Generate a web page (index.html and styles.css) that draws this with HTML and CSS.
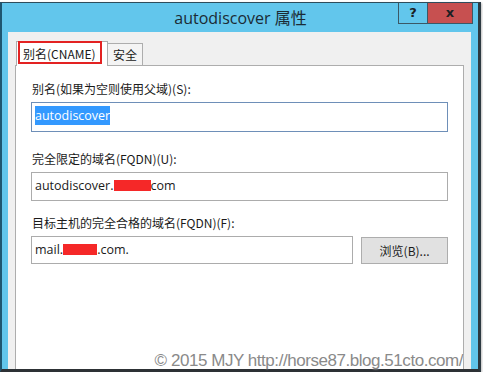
FILE: index.html
```html
<!DOCTYPE html>
<html lang="zh-CN">
<head>
    <meta charset="UTF-8">
    <meta name="viewport" content="width=device-width, initial-scale=1.0">
    <title>autodiscover 属性</title>
    <link rel="stylesheet" href="styles.css">
</head>
<body>
    <div class="window">
        <div class="titlebar">
            <div></div>
            <div class="title">autodiscover 属性</div>
            <div class="caption-buttons">
                <span class="btn-help">?</span>
                <span class="btn-close">x</span>
            </div>
        </div>
        <div class="dialog-body">
            <div class="tabs">
                <div class="tab tab-active">别名(CNAME)<span class="annot"></span></div>
                <div class="tab">安全</div>
            </div>
            <div class="panel">
                <div class="field field-alias">
                    <div class="field-label">别名(如果为空则使用父域)(S):</div>
                    <div class="input input-focus"><span class="selected">autodiscover</span></div>
                </div>
                <div class="field field-fqdn">
                    <div class="field-label">完全限定的域名(FQDN)(U):</div>
                    <div class="input">autodiscover.<span class="redact redact-long"></span>com</div>
                </div>
                <div class="field field-target">
                    <div class="field-label">目标主机的完全合格的域名(FQDN)(F):</div>
                    <div class="row">
                        <div class="input input-short">mail.<span class="redact redact-short"></span>.com.</div>
                        <button class="btn">浏览(B)...</button>
                    </div>
                </div>
                <div class="watermark">© 2015 MJY http://horse87.blog.51cto.com/</div>
            </div>
        </div>
    </div>
</body>
</html>
```

FILE: styles.css
```css
body {
    margin: 0;
    padding-top: 2px;
    background: #fff;
    font-family: "Open Sans", "Noto Sans CJK SC", sans-serif;
    color: #1a1a1a;
    overflow: hidden;
}
.window {
    width: 481px;
    height: 370px;
    box-sizing: border-box;
    background: #62c6ec;
    border-top: 1px solid #2e4d5c;
    border-left: 2px solid #1f5670;
    border-right: 3px solid #2d3a42;
    border-bottom: 3px solid #2d3135;
    padding: 0 7px 0 6px;
    display: flex;
    flex-direction: column;
    box-shadow: 1px 1px 2px rgba(0, 0, 0, 0.25);
}
.titlebar {
    height: 29px;
    display: grid;
    grid-template-columns: 1fr auto 1fr;
}
.title {
    font-size: 16px;
    line-height: 30px;
    color: #1b2b35;
    margin-left: 2px;
}
.caption-buttons {
    display: flex;
    justify-content: flex-end;
    align-items: flex-start;
    margin-right: -2px;
}
.caption-buttons span {
    height: 21px;
    box-sizing: border-box;
    border: 1px solid #3b5866;
    border-top: none;
    font-family: "DejaVu Sans", sans-serif;
    font-weight: bold;
    font-size: 13px;
    line-height: 19px;
    text-align: center;
    color: #1b2024;
}
.btn-help {
    width: 30px;
    background: #62c6ec;
}
.btn-close {
    width: 46px;
    margin-left: -1px;
    background: #c75050;
}
.dialog-body {
    flex: 1;
    background: #f0f0f0;
    padding: 9px 7px 0 7px;
    display: flex;
    flex-direction: column;
}
.tabs {
    display: flex;
    align-items: flex-end;
    margin-left: 1px;
    height: 24px;
}
.tab {
    box-sizing: border-box;
    height: 22px;
    padding: 0 5px;
    border: 1px solid #adadad;
    border-bottom: none;
    background: #f4f4f4;
    font-family: "Noto Sans CJK SC", sans-serif;
    font-size: 12px;
    line-height: 22px;
    margin-left: -1px;
}
.tab-active {
    position: relative;
    z-index: 1;
    width: 92px;
    height: 25px;
    margin-bottom: -1px;
    background: #fff;
    padding-left: 6px;
    line-height: 23px;
    margin-left: 0;
}
.annot {
    position: absolute;
    left: 1px;
    top: -1px;
    width: 84px;
    height: 23px;
    box-sizing: border-box;
    border: 2px solid #e32222;
}
.panel {
    position: relative;
    flex: 1;
    background: #fff;
    border: 1px solid #adadad;
    border-bottom: none;
    padding: 0 15px;
}
.field-label {
    font-family: "Noto Sans CJK SC", sans-serif;
    font-size: 12px;
    line-height: 16px;
    padding-left: 1px;
    margin-bottom: 5px;
}
.field-alias {
    margin-top: 15px;
}
.field-fqdn {
    margin-top: 19px;
}
.field-target {
    margin-top: 14px;
}
.input {
    box-sizing: border-box;
    height: 29px;
    border: 1px solid #acacac;
    padding: 0 3px;
    font-size: 12.5px;
    line-height: 26px;
    white-space: nowrap;
}
.input-focus {
    height: 30px;
    border-color: #6e8fb8;
}
.selected {
    background: #3399ff;
    color: #fff;
    padding: 1px 0;
}
.redact {
    display: inline-block;
    height: 11px;
    background: #f52828;
    vertical-align: -1px;
}
.redact-long {
    width: 37px;
}
.redact-short {
    width: 34px;
}
.row {
    display: flex;
    align-items: center;
    gap: 8px;
}
.input-short {
    width: 323px;
    height: 28px;
}
.btn {
    width: 87px;
    height: 27px;
    border: 1px solid #adadad;
    background: #e1e1e1;
    font-family: "Noto Sans CJK SC", sans-serif;
    font-size: 12px;
    color: #1a1a1a;
    padding: 0;
}
.watermark {
    position: absolute;
    right: 0;
    bottom: -1px;
    font-family: "Liberation Sans", sans-serif;
    font-size: 17px;
    line-height: 18px;
    letter-spacing: -0.45px;
    color: #8a8a8a;
    text-shadow: 0 0 2px #fff;
    white-space: nowrap;
}
```
